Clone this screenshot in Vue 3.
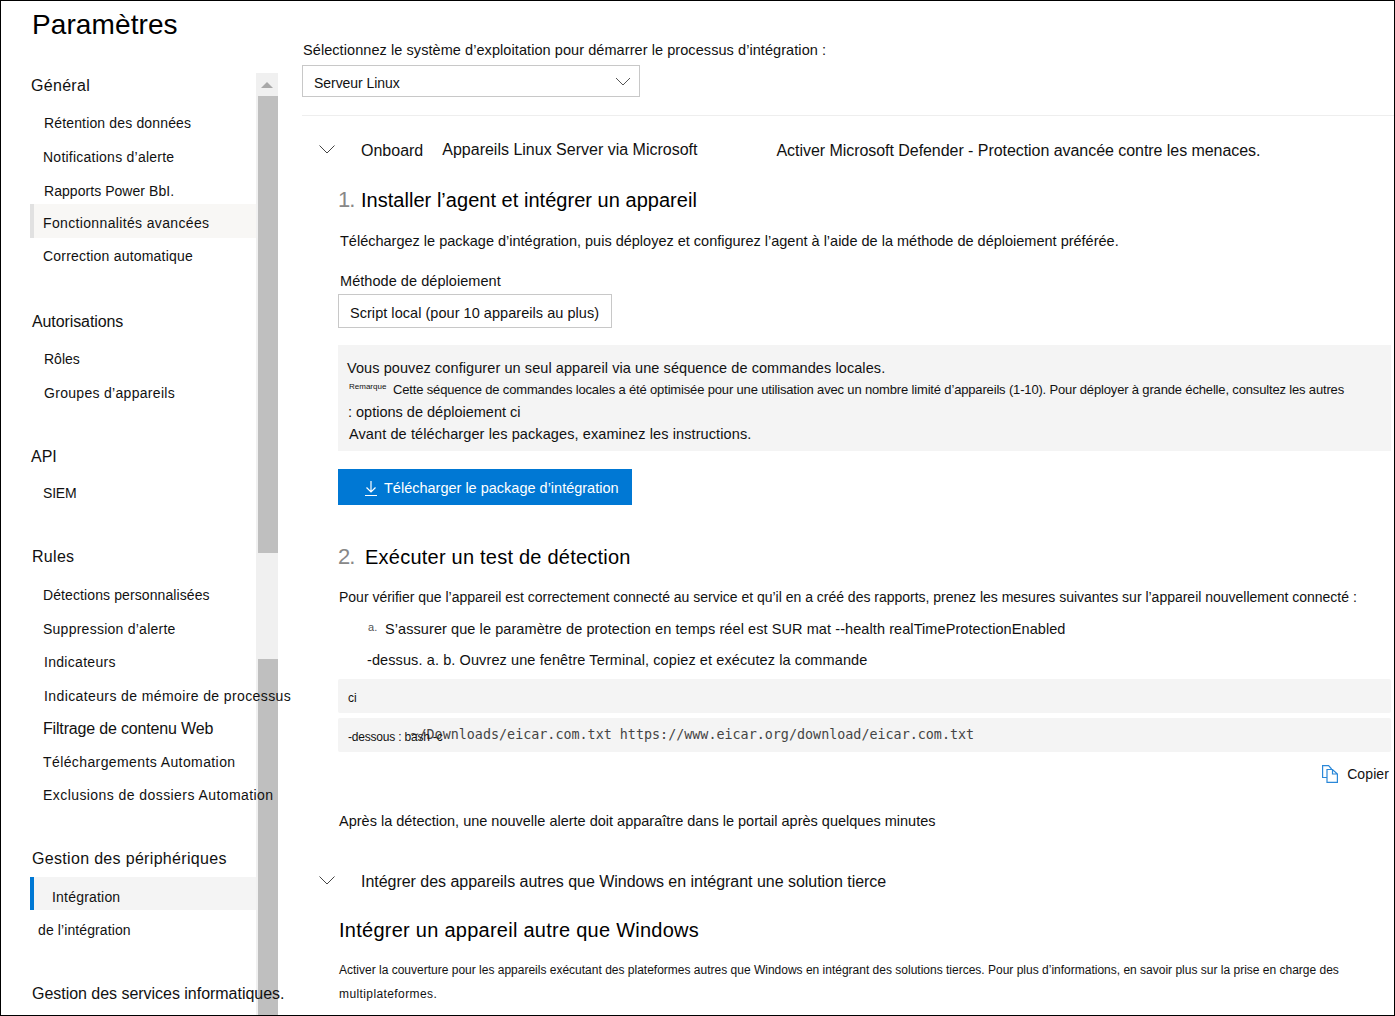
<template>
  <div class="page">
    <aside class="sidebar">
      <h1 class="title">Paramètres</h1>
      <div class="side-body">
        <nav class="nav">
          <div
            v-for="row in navRows"
            :key="row.t"
            class="nav-row"
            :class="[row.kind, { hover: row.hover, active: row.active }]"
            :style="{ marginTop: row.mt + 'px', paddingLeft: row.x + 'px', letterSpacing: row.ls + 'px' }"
          >
            <span>{{ row.t }}</span>
          </div>
        </nav>
        <div class="scrollbar">
          <div class="arrow"><span class="tri"></span></div>
          <div class="thumb thumb-top"></div>
          <div class="gap"></div>
          <div class="thumb thumb-bottom"></div>
        </div>
      </div>
    </aside>

    <main class="main">
      <div class="os-label">Sélectionnez le système d’exploitation pour démarrer le processus d’intégration :</div>
      <div class="select">
        <span class="select-t">Serveur Linux</span>
        <svg class="chev" width="16" height="9" viewBox="0 0 16 9"><path d="M1 1l7 7 7-7" fill="none" stroke="#555" stroke-width="1"/></svg>
      </div>
      <div class="divider"></div>

      <div class="acc-head">
        <svg class="acc-chev" width="16" height="9" viewBox="0 0 16 9"><path d="M.5 .5L8 8l7.500-7.500" fill="none" stroke="#444" stroke-width="1"/></svg>
        <span class="onboard">Onboard</span>
        <span class="onboard-2">Appareils Linux Server via Microsoft</span>
        <span class="onboard-3">Activer Microsoft Defender - Protection avancée contre les menaces.</span>
      </div>

      <div class="step step-1"><span class="num">1.</span><span class="step-t">Installer l’agent et intégrer un appareil</span></div>
      <div class="desc">Téléchargez le package d’intégration, puis déployez et configurez l’agent à l’aide de la méthode de déploiement préférée.</div>
      <div class="method">Méthode de déploiement</div>
      <div class="script-box">Script local (pour 10 appareils au plus)</div>

      <div class="note">
        <div class="n1">Vous pouvez configurer un seul appareil via une séquence de commandes locales.</div>
        <div class="n2"><span class="rem">Remarque</span><span class="n2-t">Cette séquence de commandes locales a été optimisée pour une utilisation avec un nombre limité d’appareils (1-10). Pour déployer à grande échelle, consultez les autres</span></div>
        <div class="n3">: options de déploiement ci</div>
        <div class="n4">Avant de télécharger les packages, examinez les instructions.</div>
      </div>

      <button class="dl-btn">
        <svg width="14" height="16" viewBox="0 0 14 16"><path d="M7 1v11M2.500 7.500L7 12l4.500-4.500M1 15.500h12" fill="none" stroke="#fff" stroke-width="1.200"/></svg>
        <span>Télécharger le package d’intégration</span>
      </button>

      <div class="step step-2"><span class="num">2.</span><span class="step-t">Exécuter un test de détection</span></div>
      <div class="para">Pour vérifier que l’appareil est correctement connecté au service et qu’il en a créé des rapports, prenez les mesures suivantes sur l’appareil nouvellement connecté :</div>
      <div class="li-a"><span class="tiny-a">a.</span><span>S’assurer que le paramètre de protection en temps réel est SUR mat --health realTimeProtectionEnabled</span></div>
      <div class="li-b">-dessus. a. b. Ouvrez une fenêtre Terminal, copiez et exécutez la commande</div>
      <div class="code code-1">ci</div>
      <div class="code code-2"><span class="code-lead">-dessous : bash -c</span><span class="mono">~/Downloads/eicar.com.txt https://www.eicar.org/download/eicar.com.txt</span></div>
      <div class="copy">
        <svg width="16" height="18" viewBox="0 0 16 18"><path d="M5 12.500H.6V.6h6l3 3.400M5 4.500h5.500l4.900 4.500v8.400H5zM10.500 4.500V9h4.900" fill="none" stroke="#2b88d8" stroke-width="1.200"/></svg>
        <span>Copier</span>
      </div>
      <div class="after">Après la détection, une nouvelle alerte doit apparaître dans le portail après quelques minutes</div>

      <div class="acc-head acc-2">
        <svg class="acc-chev" width="16" height="9" viewBox="0 0 16 9"><path d="M.5 .5L8 8l7.500-7.500" fill="none" stroke="#444" stroke-width="1"/></svg>
        <span class="onboard tight">Intégrer des appareils autres que Windows en intégrant une solution tierce</span>
      </div>
      <div class="h-other">Intégrer un appareil autre que Windows</div>
      <div class="small s1">Activer la couverture pour les appareils exécutant des plateformes autres que Windows en intégrant des solutions tierces. Pour plus d’informations, en savoir plus sur la prise en charge des</div>
      <div class="small s2">multiplateformes.</div>
    </main>
  </div>
</template>

<script setup>
const navRows = [
  { t: 'Général', kind: 'head', x: 1, mt: 0, ls: 0.3 },
  { t: 'Rétention des données', kind: 'item', x: 14, mt: 4, ls: 0.15 },
  { t: 'Notifications d’alerte', kind: 'item', x: 13, mt: 0, ls: 0.24 },
  { t: 'Rapports Power BbI.', kind: 'item', x: 14, mt: 0, ls: 0.05 },
  { t: 'Fonctionnalités avancées', kind: 'item', x: 13, mt: -4, ls: 0.35, hover: true },
  { t: 'Correction automatique', kind: 'item', x: 13, mt: 1, ls: 0.2 },
  { t: 'Autorisations', kind: 'head', x: 2, mt: 31, ls: -0.1 },
  { t: 'Rôles', kind: 'item', x: 14, mt: 4, ls: 0 },
  { t: 'Groupes d’appareils', kind: 'item', x: 14, mt: 0, ls: 0.3 },
  { t: 'API', kind: 'head', x: 1, mt: 29, ls: 0 },
  { t: 'SIEM', kind: 'item', x: 13, mt: 3, ls: -0.2 },
  { t: 'Rules', kind: 'head', x: 2, mt: 29, ls: 0.3 },
  { t: 'Détections personnalisées', kind: 'item', x: 13, mt: 5, ls: 0.1 },
  { t: 'Suppression d’alerte', kind: 'item', x: 13, mt: 0, ls: 0.25 },
  { t: 'Indicateurs', kind: 'item', x: 14, mt: -1, ls: 0.3 },
  { t: 'Indicateurs de mémoire de processus', kind: 'item', x: 14, mt: 0, ls: 0.39 },
  { t: 'Filtrage de contenu Web', kind: 'item wide', x: 13, mt: -1, ls: -0.17 },
  { t: 'Téléchargements Automation', kind: 'item', x: 13, mt: -1, ls: 0.4 },
  { t: 'Exclusions de dossiers Automation', kind: 'item', x: 13, mt: -1, ls: 0.43 },
  { t: 'Gestion des périphériques', kind: 'head', x: 2, mt: 29, ls: 0.32 },
  { t: 'Intégration', kind: 'item', x: 22, mt: 2, ls: 0.2, active: true },
  { t: 'de l’intégration', kind: 'item', x: 8, mt: 3, ls: 0.1 },
  { t: 'Gestion des services informatiques.', kind: 'head', x: 2, mt: 29, ls: -0.03 },
]
</script>

<style>
html, body {
  margin: 0;
  background: #fff;
}
</style>

<style scoped>
.page {
  width: 1395px;
  height: 1016px;
  box-sizing: border-box;
  border: 1px solid #000;
  display: flex;
  overflow: hidden;
  background: #fff;
  color: #111;
  font-family: "Liberation Sans", Arial, sans-serif;
}
.sidebar {
  width: 277px;
  flex: none;
  display: flex;
  flex-direction: column;
}
.title {
  margin: 0;
  height: 67px;
  padding: 7px 0 0 31px;
  box-sizing: border-box;
  font-size: 28px;
  line-height: 33px;
  font-weight: 400;
  letter-spacing: 0.1px;
  color: #000;
}
.side-body {
  flex: 1;
  display: flex;
  min-height: 0;
}
.nav {
  width: 255px;
  flex: none;
  padding-left: 29px;
  box-sizing: border-box;
  position: relative;
  z-index: 1;
}
.nav-row {
  height: 34px;
  line-height: 34px;
  white-space: nowrap;
  box-sizing: border-box;
}
.nav-row.head {
  font-size: 16px;
  line-height: 36px;
}
.nav-row.item {
  font-size: 14px;
}
.nav-row.wide {
  font-size: 16px;
}
.nav-row.hover {
  background: #f8f7f5;
  box-shadow: inset 4px 0 0 #e1e1e1;
  line-height: 38px;
}
.nav-row.active {
  background: #f4f4f4;
  box-shadow: inset 4px 0 0 #0078d4;
  height: 33px;
  line-height: 40px;
}
.scrollbar {
  width: 22px;
  flex: none;
  margin-top: 5px;
  display: flex;
  flex-direction: column;
  background: #f0f0f0;
}
.arrow {
  height: 23px;
  display: flex;
  align-items: center;
  justify-content: center;
}
.tri {
  width: 0;
  height: 0;
  border-left: 6px solid transparent;
  border-right: 6px solid transparent;
  border-bottom: 6px solid #a8a8a8;
}
.thumb {
  margin-left: 2px;
  background: #bfbfbf;
}
.thumb-top {
  height: 457px;
}
.gap {
  height: 106px;
}
.thumb-bottom {
  flex: 1;
}

.main {
  flex: 1;
  min-width: 0;
  padding-left: 24px;
  font-size: 14px;
}
.os-label {
  margin-top: 37px;
  line-height: 24px;
  font-size: 14.500px;
  letter-spacing: 0.07px;
  padding-left: 1px;
}
.select {
  margin-top: 3px;
  width: 338px;
  height: 32px;
  box-sizing: border-box;
  border: 1px solid #c8c8c8;
  padding: 0 8px 0 11px;
  display: flex;
  align-items: center;
  justify-content: space-between;
  font-size: 14px;
}
.select-t {
  padding-top: 4px;
  letter-spacing: -0.05px;
}
.divider {
  margin-top: 18px;
  height: 1px;
  background: #eee;
}
.acc-head {
  margin-top: 23px;
  margin-bottom: -1px;
  height: 24px;
  line-height: 24px;
  display: flex;
  align-items: center;
  font-size: 16px;
  white-space: nowrap;
  padding-left: 17px;
}
.acc-chev {
  flex: none;
  margin: -4px 26px 0 0;
}
.onboard-2 {
  margin: 0 0 2px 19px;
}
.onboard-3 {
  margin-left: 79px;
  letter-spacing: -0.05px;
}
.acc-2 {
  margin-top: 39px;
}
.tight {
  letter-spacing: -0.03px;
}
.step {
  display: flex;
  align-items: baseline;
  height: 30px;
  line-height: 30px;
  padding-left: 36px;
  white-space: nowrap;
}
.step-1 {
  margin-top: 23px;
}
.step-2 {
  margin-top: 37px;
}
.num {
  font-size: 22px;
  color: #888;
  width: 23px;
  letter-spacing: -1px;
}
.step-2 .num {
  width: 27px;
}
.step-t {
  font-size: 20px;
  color: #000;
  letter-spacing: 0.03px;
}
.step-2 .step-t {
  letter-spacing: 0.23px;
}
.desc {
  margin-top: 16px;
  padding-left: 38px;
  line-height: 20px;
  font-size: 14.500px;
  white-space: nowrap;
}
.method {
  margin-top: 20px;
  padding-left: 38px;
  line-height: 20px;
  font-size: 14.500px;
  letter-spacing: 0.05px;
}
.script-box {
  margin: 3px 0 0 36px;
  width: 274px;
  height: 34px;
  line-height: 36px;
  box-sizing: border-box;
  border: 1px solid #c8c8c8;
  padding-left: 11px;
  font-size: 14.500px;
  letter-spacing: 0.04px;
  white-space: nowrap;
}
.note {
  margin: 17px 3px 0 36px;
  height: 106px;
  background: #f4f4f4;
  padding: 13px 0 0 9px;
  box-sizing: border-box;
  font-size: 14.500px;
  white-space: nowrap;
  overflow: hidden;
}
.n1 {
  line-height: 20px;
  letter-spacing: 0.08px;
}
.n2 {
  font-size: 13px;
  display: flex;
  align-items: center;
  height: 20px;
  padding-top: 1px;
  margin-bottom: -1px;
  letter-spacing: -0.16px;
}
.rem {
  font-size: 8px;
  width: 46px;
  flex: none;
  letter-spacing: 0;
  position: relative;
  top: -3px;
  left: 2px;
}
.n3 {
  margin-top: 4px;
  line-height: 20px;
  padding-left: 1px;
}
.n4 {
  margin-top: 2px;
  line-height: 20px;
  padding-left: 2px;
  letter-spacing: 0.1px;
}
.dl-btn {
  margin: 18px 0 0 36px;
  width: 294px;
  height: 36px;
  border: 0;
  background: #0078d4;
  color: #fff;
  display: flex;
  align-items: center;
  gap: 6px;
  padding: 2px 0 0 26px;
  font: inherit;
  font-size: 14.500px;
  white-space: nowrap;
}
.para {
  margin-top: 15px;
  padding-left: 37px;
  line-height: 20px;
  font-size: 14px;
  letter-spacing: -0.01px;
  white-space: nowrap;
}
.li-a {
  margin-top: 12px;
  padding-left: 66px;
  height: 20px;
  line-height: 20px;
  font-size: 14.500px;
  letter-spacing: 0.08px;
  display: flex;
  white-space: nowrap;
}
.tiny-a {
  font-size: 11px;
  width: 17px;
  flex: none;
  color: #555;
  position: relative;
  top: -2px;
}
.li-b {
  margin-top: 11px;
  padding-left: 65px;
  line-height: 20px;
  font-size: 14.500px;
  letter-spacing: 0.1px;
  white-space: nowrap;
}
.code {
  margin: 0 3px 0 36px;
  height: 34px;
  background: #f4f4f4;
  border-radius: 2px;
  padding-left: 10px;
  display: flex;
  align-items: center;
  font-size: 12px;
  white-space: nowrap;
  box-sizing: border-box;
}
.code-1 {
  margin-top: 9px;
  padding-top: 4px;
}
.code-2 {
  margin-top: 5px;
}
.code-lead {
  position: relative;
  top: 2px;
  letter-spacing: -0.2px;
}
.mono {
  margin: 0 0 2px -32px;
  font-family: "DejaVu Sans Mono", monospace;
  font-size: 13.380px;
  color: #444;
}
.copy {
  margin: 12px 5px 0 0;
  height: 20px;
  line-height: 20px;
  display: flex;
  justify-content: flex-end;
  align-items: center;
  gap: 9px;
  font-size: 14px;
  letter-spacing: 0.1px;
}
.after {
  margin-top: 27px;
  padding-left: 37px;
  line-height: 20px;
  font-size: 14.500px;
}
.h-other {
  margin-top: 22px;
  padding-left: 37px;
  line-height: 30px;
  font-size: 20px;
  letter-spacing: 0.26px;
  color: #000;
}
.small {
  padding-left: 37px;
  line-height: 20px;
  font-size: 12px;
  white-space: nowrap;
}
.s1 {
  margin-top: 15px;
}
.s2 {
  margin-top: 4px;
  letter-spacing: 0.4px;
}
</style>
